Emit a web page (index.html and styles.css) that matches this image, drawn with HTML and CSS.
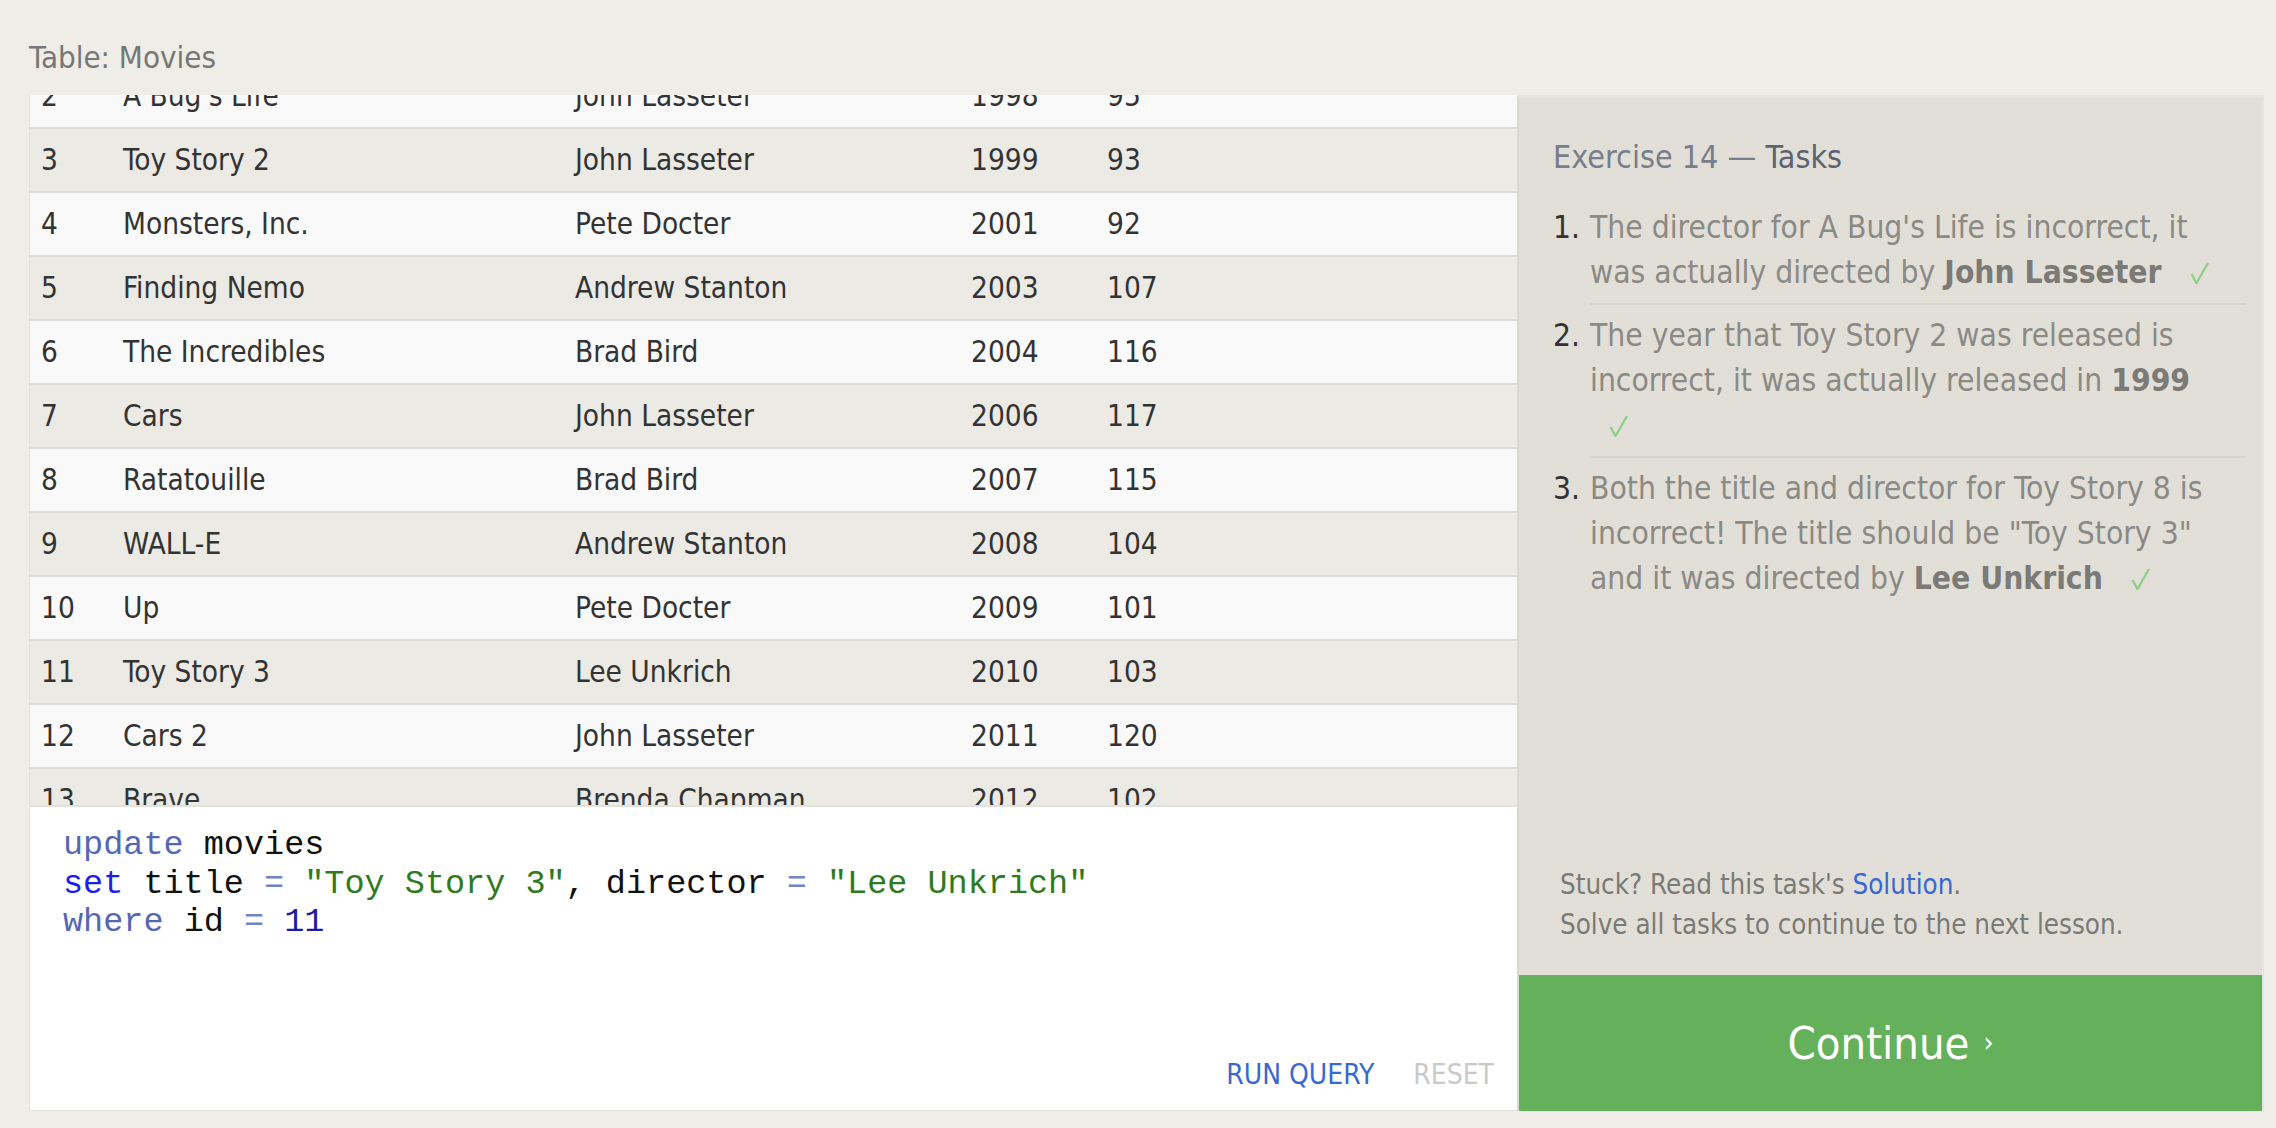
FILE: index.html
```html
<!DOCTYPE html>
<html lang="en">
<head>
<meta charset="utf-8">
<title>SQL Lesson — Exercise 14</title>
<link rel="stylesheet" href="styles.css">
</head>
<body>
<div class="page">
  <div class="caption">Table: Movies</div>
  <div class="main">
    <div class="left">
      <div class="table-wrap">
        <table class="movies">
          <colgroup>
            <col class="c-id"><col class="c-title"><col class="c-dir"><col class="c-year"><col class="c-len">
          </colgroup>
          <tbody>
            <tr class="odd"><td>1</td><td>Toy Story</td><td>John Lasseter</td><td>1995</td><td>81</td></tr>
            <tr class="even"><td>2</td><td>A Bug's Life</td><td>John Lasseter</td><td>1998</td><td>95</td></tr>
            <tr class="odd"><td>3</td><td>Toy Story 2</td><td>John Lasseter</td><td>1999</td><td>93</td></tr>
            <tr class="even"><td>4</td><td>Monsters, Inc.</td><td>Pete Docter</td><td>2001</td><td>92</td></tr>
            <tr class="odd"><td>5</td><td>Finding Nemo</td><td>Andrew Stanton</td><td>2003</td><td>107</td></tr>
            <tr class="even"><td>6</td><td>The Incredibles</td><td>Brad Bird</td><td>2004</td><td>116</td></tr>
            <tr class="odd"><td>7</td><td>Cars</td><td>John Lasseter</td><td>2006</td><td>117</td></tr>
            <tr class="even"><td>8</td><td>Ratatouille</td><td>Brad Bird</td><td>2007</td><td>115</td></tr>
            <tr class="odd"><td>9</td><td>WALL-E</td><td>Andrew Stanton</td><td>2008</td><td>104</td></tr>
            <tr class="even"><td>10</td><td>Up</td><td>Pete Docter</td><td>2009</td><td>101</td></tr>
            <tr class="odd"><td>11</td><td>Toy Story 3</td><td>Lee Unkrich</td><td>2010</td><td>103</td></tr>
            <tr class="even"><td>12</td><td>Cars 2</td><td>John Lasseter</td><td>2011</td><td>120</td></tr>
            <tr class="odd"><td>13</td><td>Brave</td><td>Brenda Chapman</td><td>2012</td><td>102</td></tr>
            <tr class="even"><td>14</td><td>Monsters University</td><td>Dan Scanlon</td><td>2013</td><td>110</td></tr>
          </tbody>
        </table>
      </div>
      <div class="editor">
<pre class="code"><span class="kw">update</span> movies
<span class="kw2">set</span> title <span class="op">=</span> <span class="str">"Toy Story 3"</span>, director <span class="op">=</span> <span class="str">"Lee Unkrich"</span>
<span class="kw">where</span> id <span class="op">=</span> <span class="num">11</span></pre>
        <div class="actions">
          <span class="run">RUN QUERY</span>
          <span class="reset">RESET</span>
        </div>
      </div>
    </div>
    <div class="panel">
      <div class="tasks">
        <h2 class="heading"><span class="ex">Exercise 14 —</span> <span class="tk">Tasks</span></h2>
        <ol class="list">
          <li class="item">
            <span class="idx">1.</span>
            <div class="body">The director for A Bug's Life is incorrect, it was actually directed by <b>John Lasseter</b> <svg class="check" width="22" height="22" viewBox="0 0 22 22"><path d="M2.5 12 L7.5 21 L19 1" fill="none" stroke="#8dd088" stroke-width="2.3"/></svg></div>
          </li>
          <li class="item">
            <span class="idx">2.</span>
            <div class="body">The year that Toy Story 2 was released is incorrect, it was actually released in <b>1999</b> <svg class="check" width="22" height="22" viewBox="0 0 22 22"><path d="M2.5 12 L7.5 21 L19 1" fill="none" stroke="#8dd088" stroke-width="2.3"/></svg></div>
          </li>
          <li class="item last">
            <span class="idx">3.</span>
            <div class="body">Both the title and director for Toy Story 8 is incorrect! The title should be "Toy Story 3" and it was directed by <b>Lee Unkrich</b> <svg class="check" width="22" height="22" viewBox="0 0 22 22"><path d="M2.5 12 L7.5 21 L19 1" fill="none" stroke="#8dd088" stroke-width="2.3"/></svg></div>
          </li>
        </ol>
      </div>
      <div class="help">
        <div>Stuck? Read this task's <a class="link">Solution</a>.</div>
        <div>Solve all tasks to continue to the next lesson.</div>
      </div>
      <div class="continue">Continue <span class="chev">›</span></div>
    </div>
  </div>
</div>
</body>
</html>
```
FILE: styles.css
```css
html, body {
  margin: 0;
  padding: 0;
}

body {
  background: #efede7;
  font-family: "DejaVu Sans Condensed", "DejaVu Sans", sans-serif;
  font-stretch: condensed;
  color: #333;
}

.page {
  padding: 0 12px 17px 29px;
}

.caption {
  padding: 39px 0 20px 0;
  font-size: 31px;
  line-height: 36px;
  color: #777;
}

.main {
  display: flex;
  height: 1016px;
}

.left {
  width: 1488px;
  display: flex;
  flex-direction: column;
  border-left: 1px solid #e3e1db;
  box-sizing: border-box;
}

.table-wrap {
  height: 712px;
  overflow: hidden;
  border-bottom: 2px solid #e3e1db;
  box-sizing: border-box;
  background: #f9f9f9;
}

.movies {
  width: 100%;
  table-layout: fixed;
  border-collapse: collapse;
  margin-top: -94px;
  font-size: 29.5px;
  color: #333;
}

.c-id { width: 82px; }
.c-title { width: 452px; }
.c-dir { width: 396px; }
.c-year { width: 136px; }

.movies td {
  height: 62px;
  padding: 0 0 0 11px;
  line-height: 62px;
  white-space: nowrap;
  border-bottom: 2px solid #dedddb;
  box-sizing: border-box;
}

.movies tr.even td { background: #f9f9f9; }
.movies tr.odd td { background: #ebeae4; }

.editor {
  flex: 1;
  background: #fff;
  border-bottom: 1px solid #e4e2dc;
  display: flex;
  flex-direction: column;
}

.code {
  flex: 1;
  margin: 0;
  padding: 19px 0 0 33px;
  font-family: "Liberation Mono", "Courier New", monospace;
  font-size: 33.5px;
  line-height: 38.5px;
  color: #111;
}

.kw { color: #5567b3; }
.kw2 { color: #1c1cf2; }
.op { color: #7184c7; }
.str { color: #2f7a1c; }
.num { color: #1b1ba6; }

.actions {
  display: flex;
  justify-content: flex-end;
  gap: 39px;
  padding: 0 23px 15px 0;
  font-size: 28px;
  line-height: 40px;
}

.run { color: #3768d4; }
.reset { color: #c9c9c9; }

.panel {
  width: 747px;
  background: #e1dfd8;
  border: 2px solid #e6e4de;
  border-top-width: 3px;
  border-left-color: #dad8d1;
  border-bottom: 0;
  box-sizing: border-box;
  display: flex;
  flex-direction: column;
}

.tasks {
  flex: 1;
  padding: 0 16px 0 34px;
}

.heading {
  margin: 39px 0 20px 0;
  font-size: 32px;
  line-height: 40px;
  font-weight: normal;
}

.heading .ex { color: #787e8b; }
.heading .tk { color: #5d6371; }

.list {
  list-style: none;
  margin: 0;
  padding: 0;
  font-size: 31.5px;
  line-height: 45px;
}

.item {
  display: flex;
}

.idx {
  width: 37px;
  flex: none;
  padding-top: 8px;
  color: #333;
}

.body {
  flex: 1;
  padding: 8px 14px 8px 0;
  border-bottom: 2px solid #d7d5ce;
  color: #8b8a85;
}

.item.last .body {
  border-bottom: 0;
}

.body b {
  color: #7b7a76;
}

.check {
  display: inline-block;
  margin-left: 18px;
  vertical-align: -1px;
}

.help {
  padding: 0 0 31px 41px;
  font-size: 27.5px;
  line-height: 40px;
  color: #7a7a76;
}

.link {
  color: #3768d4;
}

.continue {
  height: 136px;
  background: #65b15b;
  color: #fff;
  font-size: 45px;
  display: flex;
  align-items: center;
  justify-content: center;
  gap: 14px;
}

.chev {
  font-size: 28px;
  position: relative;
  top: -1px;
}
```
